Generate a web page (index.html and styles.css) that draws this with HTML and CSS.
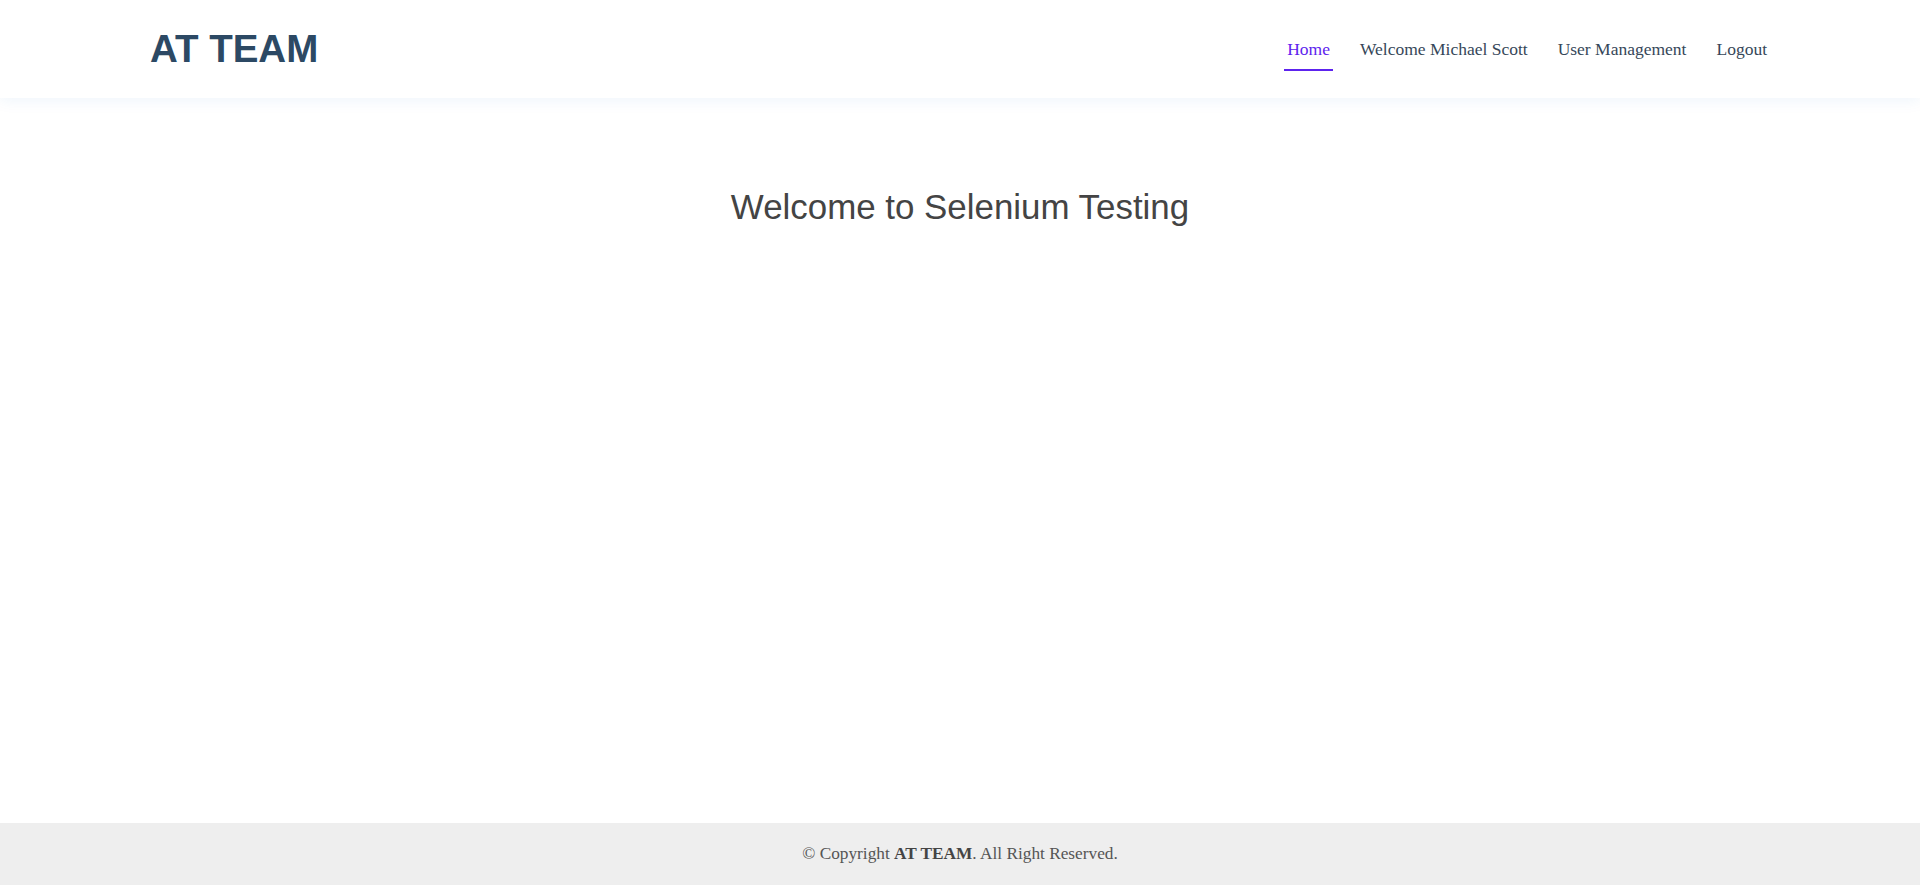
FILE: index.html
```html
<!DOCTYPE html>
<html lang="en">
<head>
<meta charset="utf-8">
<title>AT TEAM</title>
<link rel="stylesheet" href="styles.css">
</head>
<body>
<div class="page">
  <header class="header">
    <div class="container header-inner">
      <a class="logo" href="#">AT TEAM</a>
      <nav class="nav">
        <a class="nav-link active" href="#">Home</a>
        <a class="nav-link" href="#">Welcome Michael Scott</a>
        <a class="nav-link" href="#">User Management</a>
        <a class="nav-link" href="#">Logout</a>
      </nav>
    </div>
  </header>
  <main class="main">
    <h1 class="title">Welcome to Selenium Testing</h1>
  </main>
  <footer class="footer">
    <p class="copyright">&copy; Copyright <strong>AT TEAM</strong>. All Right Reserved.</p>
  </footer>
</div>
</body>
</html>
```
FILE: styles.css
```css
html, body {
  margin: 0;
  padding: 0;
  height: 100%;
}
body {
  font-family: "Liberation Serif", "Times New Roman", serif;
  background: #fff;
}
.page {
  min-height: 100%;
  display: flex;
  flex-direction: column;
}
.header {
  height: 98px;
  background: #fff;
  box-shadow: 0 2px 15px rgba(25, 119, 204, 0.08);
  position: relative;
  z-index: 2;
}
.container {
  padding: 0 150px;
}
.header-inner {
  height: 100%;
  display: flex;
  align-items: center;
  justify-content: space-between;
}
.logo {
  font-family: "Liberation Sans", Arial, sans-serif;
  font-weight: 700;
  font-size: 38.5px;
  color: #2c4964;
  text-decoration: none;
}
.nav {
  display: flex;
  gap: 24px;
  margin-top: 1px;
}
.nav-link {
  position: relative;
  font-size: 17.5px;
  color: #364759;
  text-decoration: none;
  padding: 0 3px;
}
.nav-link.active {
  color: #5d23ee;
}
.nav-link.active::after {
  content: "";
  position: absolute;
  left: 0;
  right: 0;
  bottom: -11px;
  height: 2px;
  background: #5d23ee;
}
.main {
  flex: 1;
  text-align: center;
}
.title {
  font-family: "Liberation Sans", Arial, sans-serif;
  font-weight: 400;
  font-size: 34.9px;
  color: #444;
  margin: 89px 0 0;
}
.footer {
  height: 62px;
  background: #eeeeee;
  display: flex;
  align-items: center;
  justify-content: center;
  color: #555;
}
.copyright {
  margin: 0;
  font-size: 17.3px;
}
.copyright strong {
  color: #444;
}
```
